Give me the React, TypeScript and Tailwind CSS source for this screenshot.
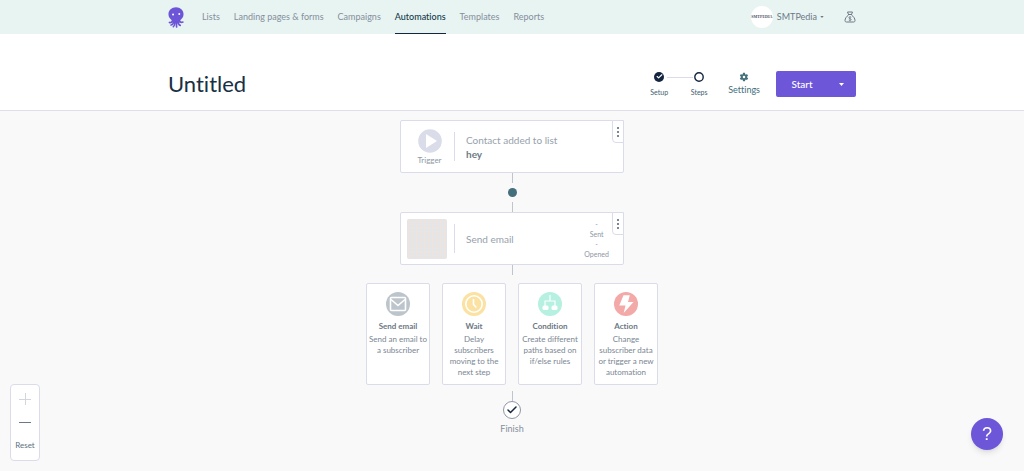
import React, { useState } from 'react';
import { Check } from 'lucide-react';

interface StepOption {
  title: string;
  text: string;
  color: string;
  icon: React.ReactNode;
}

const navItems = ['Lists', 'Landing pages & forms', 'Campaigns', 'Automations', 'Templates', 'Reports'];

const options: StepOption[] = [
  {
    title: 'Send email',
    text: 'Send an email to a subscriber',
    color: 'bg-[#bcc4cc]',
    icon: (
      <svg viewBox="0 0 24 24" className="w-6 h-6" fill="none" stroke="#fff" strokeWidth="1.6">
        <rect x="4.5" y="5.5" width="15" height="13" rx="1" />
        <path d="M5 7.5 12 13.5l7-6" />
      </svg>
    ),
  },
  {
    title: 'Wait',
    text: 'Delay subscribers moving to the next step',
    color: 'bg-[#fbe2a2]',
    icon: (
      <svg viewBox="0 0 24 24" className="w-6 h-6" fill="none" stroke="#fff" strokeWidth="1.6">
        <circle cx="12" cy="12" r="8.2" />
        <path d="M11.5 7v5.5l2.8 3" />
      </svg>
    ),
  },
  {
    title: 'Condition',
    text: 'Create different paths based on if/else rules',
    color: 'bg-[#b5f0e0]',
    icon: (
      <svg viewBox="0 0 24 24" className="w-6 h-6" fill="#fff">
        <path d="M11.4 3h1.2v5.4h5V14h-1.2V9.600H7.600V14H6.400V8.400h5z" />
        <rect x="4.500" y="13.500" width="6" height="4.500" rx="1.500" />
        <rect x="13.500" y="13.500" width="6" height="4.500" rx="1.500" />
      </svg>
    ),
  },
  {
    title: 'Action',
    text: 'Change subscriber data or trigger a new automation',
    color: 'bg-[#f2a9a7]',
    icon: (
      <svg viewBox="0 0 24 24" className="w-6 h-6" fill="#fff">
        <path d="M9.500 3.200h6.300l-1.800 6.800h5.500L9.700 21l1.800-7.600H5.300z" />
      </svg>
    ),
  },
];

const Octopus = () => (
  <svg viewBox="0 0 48 64" className="w-4 h-[21px]" aria-hidden="true">
    <g fill="none" stroke="#6d55d8" strokeWidth="5" strokeLinecap="round">
      <path d="M13 43c-2 4-5 6-9 4" />
      <path d="M17 46c-1 5-3 8-8 9" />
      <path d="M21 47c0 7-1 10-5 13" />
      <path d="M26 47c0 7-1 10 0 14" />
      <path d="M31 46c0 6 1 9 6 10" />
      <path d="M35 43c2 4 5 5 10 3" />
    </g>
    <path d="M24 1C11 1 1 10 1 22c0 9 5 14 10 18v6l6 4h14l6-4v-6c5-4 10-9 10-18C47 10 37 1 24 1z" fill="#6d55d8" />
    <circle cx="15" cy="23" r="3" fill="#fff" />
    <circle cx="34" cy="21" r="3" fill="#fff" />
  </svg>
);

const MoneyBag = () => (
  <svg viewBox="0 0 24 24" className="w-3 h-3" fill="none" stroke="#6c7885" strokeWidth="2" aria-hidden="true">
    <path d="M7 2h10l-2 5H9zM8 7h8M9 8c-4 3-7 7-7 11 0 2 1 3 3 3h14c2 0 3-1 3-3 0-4-3-8-7-11" />
    <path d="M14.500 12.500c-1-1-5-1-5 1s5 1.500 5 3.500-4 2-5 1M12 10.500v10" strokeWidth="1.500" />
  </svg>
);

const Gear = () => (
  <svg viewBox="0 0 24 24" className="w-[10px] h-[10px]" fill="#43707c" aria-hidden="true">
    <path d="M19.400 13a7.800 7.800 0 0 0 0-2l2.100-1.600a.5.5 0 0 0 .1-.7l-2-3.400a.5.5 0 0 0-.6-.2l-2.500 1a7.300 7.300 0 0 0-1.700-1l-.4-2.700a.5.5 0 0 0-.5-.4h-4a.5.5 0 0 0-.5.4L9 5.100a7.300 7.300 0 0 0-1.700 1l-2.500-1a.5.5 0 0 0-.6.2l-2 3.400a.5.5 0 0 0 .1.7L4.500 11a7.800 7.800 0 0 0 0 2l-2.100 1.600a.5.5 0 0 0-.1.7l2 3.400c.1.2.4.3.6.2l2.500-1a7.300 7.300 0 0 0 1.700 1l.4 2.700c0 .2.200.4.500.4h4c.3 0 .5-.2.500-.4l.4-2.700a7.300 7.300 0 0 0 1.700-1l2.500 1c.2.100.5 0 .6-.2l2-3.400a.5.5 0 0 0-.1-.7zM12 15a3 3 0 1 1 0-6 3 3 0 0 1 0 6z" />
  </svg>
);

const Caret = ({ className }: { className: string }) => (
  <svg viewBox="0 0 10 6" className={className} fill="currentColor" aria-hidden="true">
    <path d="M0 0h10L5 6z" />
  </svg>
);

const Line = () => <div className="w-px h-[10px] bg-[#bfc5cc]" />;

const MenuButton = () => (
  <button
    aria-label="Step menu"
    className="absolute -top-px -right-px w-3 h-[23px] flex flex-col items-center justify-center gap-[2px] bg-white border border-[#dadce9] rounded-bl-sm"
  >
    <span className="w-[2px] h-[2px] bg-[#7d8893]" />
    <span className="w-[2px] h-[2px] bg-[#7d8893]" />
    <span className="w-[2px] h-[2px] bg-[#7d8893]" />
  </button>
);

const App: React.FC = () => {
  const [active, setActive] = useState('Automations');

  return (
    <div className="min-h-screen flex flex-col bg-[#f9f9f9] font-['Lato',sans-serif] [font-variant-ligatures:none] text-[#6c7885]">
      {/* Top navigation */}
      <header className="bg-[#e8f4f2]">
        <div className="max-w-[688px] mx-auto h-[34px] flex items-center">
          <a href="#" aria-label="Home">
            <Octopus />
          </a>
          <nav className="flex self-stretch gap-[14px] ml-[18px]">
            {navItems.map((item) => (
              <a
                key={item}
                href="#"
                onClick={() => setActive(item)}
                className={`flex items-center text-[9px] border-b pt-px whitespace-nowrap ${
                  item === active ? 'font-medium text-[#123a4a] border-[#13253f]' : 'text-[#858e9c] border-transparent'
                }`}
              >
                {item}
              </a>
            ))}
          </nav>
          <button className="ml-auto flex items-center text-[9px]">
            <span className="w-[22px] h-[22px] mr-1 rounded-full bg-white flex items-center justify-center font-['Liberation_Serif',serif] font-bold text-[4px] text-[#4d5566]">
              SMTPEDIA
            </span>
            SMTPedia
            <Caret className="w-1 h-[2px] ml-[3px]" />
          </button>
          <a href="#" aria-label="Billing" className="ml-5">
            <MoneyBag />
          </a>
        </div>
      </header>

      {/* Title bar */}
      <section className="bg-white border-b border-[#dfdfe8]">
        <div className="max-w-[688px] mx-auto h-[76px] pt-6 flex items-center">
          <h1 className="text-[22px] leading-7 text-[#173044]">Untitled</h1>
          <ol className="ml-auto flex">
            <li className="w-[40px] flex flex-col items-center">
              <span className="w-[10px] h-[10px] rounded-full bg-[#13253f] flex items-center justify-center">
                <Check className="w-[7px] h-[7px] text-white" strokeWidth={4} />
              </span>
              <span className="mt-[5px] text-[7px] leading-[10px] text-[#43606e]">Setup</span>
            </li>
            <li className="relative w-[40px] flex flex-col items-center">
              <span className="absolute top-[5px] -left-3 w-[26px] h-px bg-[#dadce9]" />
              <svg viewBox="0 0 10 10" className="w-[10px] h-[10px]" aria-hidden="true">
                <circle cx="5" cy="5" r="4.200" fill="#fff" stroke="#13253f" strokeWidth="1.400" />
              </svg>
              <span className="mt-[5px] text-[7px] leading-[10px] text-[#43606e]">Steps</span>
            </li>
          </ol>
          <button className="ml-[9px] flex flex-col items-center gap-[2px] text-[9px] leading-3 text-[#43707c]">
            <Gear />
            Settings
          </button>
          <div className="ml-4 flex h-[26px] rounded-xs bg-[#6e56d9] text-white">
            <button className="w-[52px] text-[10px] font-medium">Start</button>
            <button aria-label="More start options" className="w-7 pr-[2px] flex items-center justify-center">
              <Caret className="w-[5px] h-[3px]" />
            </button>
          </div>
        </div>
      </section>

      {/* Workflow canvas */}
      <main className="relative flex-1 flex flex-col items-center pt-[9px] pb-9">
        <article className="relative w-56 h-[53px] flex items-center bg-white border border-[#dadce9] rounded-xs">
          <div className="w-[53px] pl-1 flex flex-col items-center">
            <svg viewBox="0 0 24 24" className="w-6 h-6" aria-hidden="true">
              <circle cx="12" cy="12" r="11.800" fill="#dadce9" />
              <path d="M8 5v14l11-7z" fill="#fff" />
            </svg>
            <span className="mt-[2px] text-[8px] leading-[10px] text-[#8e98a3]">Trigger</span>
          </div>
          <div className="w-px h-[29px] bg-[#dadce9]" />
          <p className="ml-[11px] text-[10px] leading-[14px] text-[#97a1ab]">
            Contact added to list
            <strong className="block text-[#6c7c88]">hey</strong>
          </p>
          <MenuButton />
        </article>
        <Line />
        <button aria-label="Add step" className="w-[9px] h-[9px] my-[5px] rounded-full bg-[#43707c]" />
        <Line />
        <article className="relative w-56 h-[53px] flex items-center bg-white border border-[#dadce9] rounded-xs">
          <div className="w-10 h-10 ml-[6px] rounded-xs bg-[#e3e6ea] bg-[radial-gradient(circle,#f0e2d6_0px,transparent_2px)] bg-size-[4px_3px]" />
          <div className="ml-[7px] w-px h-[29px] bg-[#dadce9]" />
          <p className="ml-[11px] text-[10px] leading-[14px] text-[#97a1ab]">Send email</p>
          <dl className="ml-auto mr-[14px] flex flex-col text-center text-[7px] leading-[10px] text-[#8e98a3]">
            <div className="flex flex-col-reverse">
              <dt>Sent</dt>
              <dd>-</dd>
            </div>
            <div className="flex flex-col-reverse">
              <dt>Opened</dt>
              <dd>-</dd>
            </div>
          </dl>
          <MenuButton />
        </article>
        <Line />

        <div className="mt-2 flex gap-3">
          {options.map((option) => (
            <button
              key={option.title}
              className="w-16 h-[102px] pt-2 px-px flex flex-col items-center bg-white border border-[#dadce9] rounded-xs"
            >
              <span className={`w-6 h-6 rounded-full ${option.color}`}>{option.icon}</span>
              <strong className="mt-1 text-[8px] leading-3">{option.title}</strong>
              <span className="mt-[2px] text-[8px] leading-[11px] text-[#7a8692]">{option.text}</span>
            </button>
          ))}
        </div>

        <div className="mt-[6px] flex flex-col items-center">
          <Line />
          <span className="w-[18px] h-[18px] rounded-full bg-white border border-[#8e98a3] flex items-center justify-center">
            <Check className="w-3 h-3 text-[#13253f]" strokeWidth={3} />
          </span>
          <span className="mt-1 text-[9px] leading-3 text-[#858e9c]">Finish</span>
        </div>

        {/* Zoom controls */}
        <div className="absolute left-[10px] bottom-[10px] w-[30px] h-[77px] flex flex-col items-center bg-white border border-[#dadce9] rounded-sm">
          <button aria-label="Zoom in" className="mt-2 w-3 h-3">
            <svg viewBox="0 0 12 12" className="w-3 h-3" stroke="#d3d6de">
              <path d="M6.500 0v12M0 6.500h12" />
            </svg>
          </button>
          <button aria-label="Zoom out" className="mt-[11px] w-3 h-3">
            <svg viewBox="0 0 12 12" className="w-3 h-3" stroke="#6c7885">
              <path d="M0 6.500h12" />
            </svg>
          </button>
          <button className="mt-3 text-[8px] leading-[10px] text-[#5c7180]">Reset</button>
        </div>
      </main>

      <button
        aria-label="Help"
        className="fixed right-[21px] bottom-[21px] w-8 h-8 rounded-full bg-[#6e56d9] text-white font-['Liberation_Sans',sans-serif] text-[18px] leading-none shadow-md"
      >
        ?
      </button>
    </div>
  );
};

export default App;
